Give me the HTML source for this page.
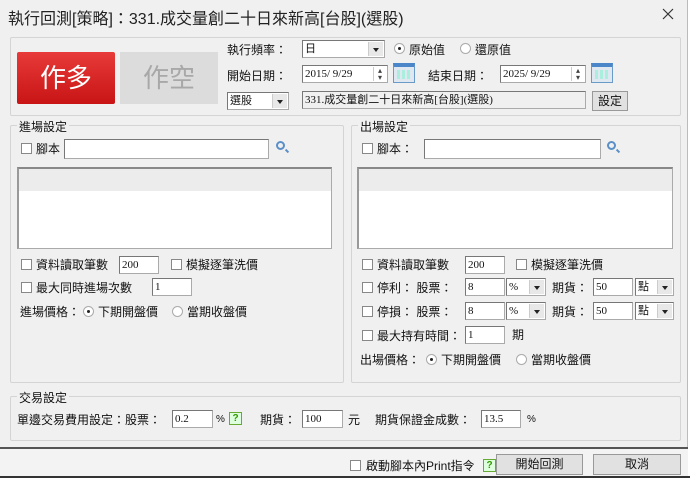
<!DOCTYPE html><html><head><meta charset="utf-8"><style>
*{box-sizing:border-box;margin:0;padding:0}
body{width:690px;height:478px;overflow:hidden;background:#fff;font-family:"Liberation Sans","Noto Sans CJK TC",sans-serif;font-size:12px;color:#111;position:relative}
.win{position:absolute;left:0;top:0;width:688px;height:476px;background:#f0f0f0;border-right:1px solid #bbb}
.a{position:absolute;white-space:nowrap}
.grp{position:absolute;border:1px solid #d4d4d4;border-radius:2px}
.gt{position:absolute;background:#f0f0f0;padding:0 2px;top:-8px;left:6px;font-size:12px}
.in{position:absolute;background:#fff;border:1px solid #aaa;border-top-color:#777;border-left-color:#777;font-size:11px;padding-left:2px;line-height:16px;height:18px;font-family:"Liberation Serif","Noto Sans CJK TC",serif}
.cb{position:absolute;width:11px;height:11px;border:1px solid #888;background:#fff}
.rd{position:absolute;width:11px;height:11px;border-radius:50%;border:1px solid #aaa;background:#fff}
.rd.on::after{content:"";position:absolute;left:3px;top:3px;width:3px;height:3px;border-radius:50%;background:#222}
.dd{position:absolute;right:1px;top:1px;width:15px;bottom:1px;background:#e8e8e8;border-left:1px solid #ccc}
.dd::after{content:"";position:absolute;left:4px;top:6px;border:3px solid transparent;border-top:4px solid #222}
.btn{position:absolute;background:#e1e1e1;border:1px solid #999;text-align:center;font-size:12px}
.q{position:absolute;width:13px;height:13px;border:1px solid #6a3;background:#dfd;color:#390;font-size:10px;line-height:11px;text-align:center;font-weight:bold}
.cal{position:absolute;width:22px;height:20px;background:#dfe8f0;border:1px solid #6a9ac8;border-top:4px solid #4a86c8}
.cal::after{content:"";position:absolute;left:3px;top:3px;width:14px;height:9px;background:repeating-linear-gradient(90deg,#aed 0 3px,transparent 3px 5px)}
.spin{position:absolute;right:1px;top:1px;width:13px;bottom:1px;border-left:1px solid #ccc;font-size:8px;line-height:7px;text-align:center;color:#444}
.mag{position:absolute;width:9px;height:9px;border:2px solid #5a8fc8;border-radius:50%}
.mag::after{content:"";position:absolute;left:7px;top:7px;width:4px;height:2px;background:#5a8fc8;transform:rotate(45deg)}
</style></head><body><div class="win">
<div class="a" style="left:8px;top:5px;font-size:16px;color:#222">執行回測[策略]：331.成交量創二十日來新高[台股](選股)</div>
<svg class="a" style="left:662px;top:8px" width="12" height="12"><path d="M1 1L11 11M11 1L1 11" stroke="#333" stroke-width="1.2"/></svg>

<div class="grp" style="left:10px;top:37px;width:671px;height:79px"></div>
<div class="a" style="left:17px;top:52px;width:98px;height:52px;background:linear-gradient(#e83a3a,#c81414);border-radius:2px;color:#fff;font-size:26px;text-align:center;line-height:52px">作多</div>
<div class="a" style="left:120px;top:52px;width:98px;height:52px;background:#dcdcdc;color:#a8a8a8;font-size:26px;text-align:center;line-height:52px">作空</div>
<div class="a" style="left:227px;top:41px">執行頻率：</div>
<div class="in" style="left:302px;top:40px;width:83px">日<div class="dd"></div></div>
<div class="rd on" style="left:394px;top:43px"></div><div class="a" style="left:409px;top:41px">原始值</div>
<div class="rd" style="left:460px;top:43px"></div><div class="a" style="left:475px;top:41px">還原值</div>
<div class="a" style="left:227px;top:67px">開始日期：</div>
<div class="in" style="left:302px;top:65px;width:86px">2015/ 9/29<div class="spin">▴<br>▾</div></div>
<div class="cal" style="left:393px;top:63px"></div>
<div class="a" style="left:428px;top:67px">結束日期：</div>
<div class="in" style="left:500px;top:65px;width:86px">2025/ 9/29<div class="spin">▴<br>▾</div></div>
<div class="cal" style="left:591px;top:63px"></div>
<div class="in" style="left:227px;top:92px;width:62px">選股<div class="dd"></div></div>
<div class="in" style="left:302px;top:91px;width:284px;background:#f0f0f0">331.成交量創二十日來新高[台股](選股)</div>
<div class="btn" style="left:592px;top:91px;width:36px;height:20px;line-height:18px">設定</div>

<div class="grp" style="left:10px;top:125px;width:334px;height:258px"><span class="gt">進場設定</span></div>
<div class="cb" style="left:21px;top:143px"></div><div class="a" style="left:36px;top:140px">腳本</div>
<div class="in" style="left:64px;top:139px;width:205px;height:20px"></div>
<div class="mag" style="left:276px;top:141px"></div>
<div class="a" style="left:17px;top:167px;width:315px;height:82px;background:#fff;border:1px solid #aaa;border-top:2px solid #888;border-left:2px solid #999"><div style="height:22px;background:#ececec"></div></div>
<div class="cb" style="left:21px;top:259px"></div><div class="a" style="left:36px;top:256px">資料讀取筆數</div>
<div class="in" style="left:119px;top:256px;width:40px">200</div>
<div class="cb" style="left:171px;top:259px"></div><div class="a" style="left:186px;top:256px">模擬逐筆洗價</div>
<div class="cb" style="left:21px;top:282px"></div><div class="a" style="left:36px;top:279px">最大同時進場次數</div>
<div class="in" style="left:152px;top:278px;width:40px">1</div>
<div class="a" style="left:20px;top:303px">進場價格：</div>
<div class="rd on" style="left:83px;top:306px"></div><div class="a" style="left:98px;top:303px">下期開盤價</div>
<div class="rd" style="left:172px;top:306px"></div><div class="a" style="left:187px;top:303px">當期收盤價</div>

<div class="grp" style="left:351px;top:125px;width:330px;height:258px"><span class="gt">出場設定</span></div>
<div class="cb" style="left:362px;top:143px"></div><div class="a" style="left:377px;top:140px">腳本：</div>
<div class="in" style="left:424px;top:139px;width:177px;height:20px"></div>
<div class="mag" style="left:607px;top:141px"></div>
<div class="a" style="left:357px;top:167px;width:316px;height:82px;background:#fff;border:1px solid #aaa;border-top:2px solid #888;border-left:2px solid #999"><div style="height:22px;background:#ececec"></div></div>
<div class="cb" style="left:362px;top:259px"></div><div class="a" style="left:377px;top:256px">資料讀取筆數</div>
<div class="in" style="left:465px;top:256px;width:40px">200</div>
<div class="cb" style="left:516px;top:259px"></div><div class="a" style="left:531px;top:256px">模擬逐筆洗價</div>
<div class="cb" style="left:362px;top:282px"></div><div class="a" style="left:377px;top:279px">停利：&nbsp;股票：</div>
<div class="in" style="left:465px;top:278px;width:40px">8</div>
<div class="in" style="left:506px;top:278px;width:40px">%<div class="dd"></div></div>
<div class="a" style="left:552px;top:279px">期貨：</div>
<div class="in" style="left:593px;top:278px;width:40px">50</div>
<div class="in" style="left:635px;top:278px;width:39px">點<div class="dd"></div></div>
<div class="cb" style="left:362px;top:306px"></div><div class="a" style="left:377px;top:303px">停損：&nbsp;股票：</div>
<div class="in" style="left:465px;top:302px;width:40px">8</div>
<div class="in" style="left:506px;top:302px;width:40px">%<div class="dd"></div></div>
<div class="a" style="left:552px;top:303px">期貨：</div>
<div class="in" style="left:593px;top:302px;width:40px">50</div>
<div class="in" style="left:635px;top:302px;width:39px">點<div class="dd"></div></div>
<div class="cb" style="left:362px;top:330px"></div><div class="a" style="left:377px;top:327px">最大持有時間：</div>
<div class="in" style="left:465px;top:326px;width:40px">1</div>
<div class="a" style="left:512px;top:326px">期</div>
<div class="a" style="left:360px;top:351px">出場價格：</div>
<div class="rd on" style="left:426px;top:354px"></div><div class="a" style="left:441px;top:351px">下期開盤價</div>
<div class="rd" style="left:516px;top:354px"></div><div class="a" style="left:531px;top:351px">當期收盤價</div>

<div class="grp" style="left:10px;top:396px;width:671px;height:45px"><span class="gt">交易設定</span></div>
<div class="a" style="left:17px;top:411px">單邊交易費用設定：股票：</div>
<div class="in" style="left:172px;top:410px;width:41px">0.2</div>
<div class="a" style="left:216px;top:414px;font-size:10px">%</div>
<div class="q" style="left:229px;top:412px">?</div>
<div class="a" style="left:260px;top:411px">期貨：</div>
<div class="in" style="left:302px;top:410px;width:41px">100</div>
<div class="a" style="left:348px;top:411px">元</div>
<div class="a" style="left:375px;top:411px">期貨保證金成數：</div>
<div class="in" style="left:481px;top:410px;width:40px">13.5</div>
<div class="a" style="left:527px;top:414px;font-size:10px">%</div>

<div class="a" style="left:0;top:447px;width:688px;height:2px;background:#555"></div>
<div class="a" style="left:0;top:449px;width:688px;height:27px;background:#f3f3f3"></div>
<div class="cb" style="left:350px;top:460px"></div><div class="a" style="left:366px;top:457px">啟動腳本內Print指令</div>
<div class="q" style="left:483px;top:459px">?</div>
<div class="btn" style="left:496px;top:454px;width:87px;height:21px;line-height:19px">開始回測</div>
<div class="btn" style="left:593px;top:454px;width:88px;height:21px;line-height:19px">取消</div>
</div>
<div class="a" style="left:0;top:476px;width:690px;height:2px;background:#333"></div>
</body></html>
